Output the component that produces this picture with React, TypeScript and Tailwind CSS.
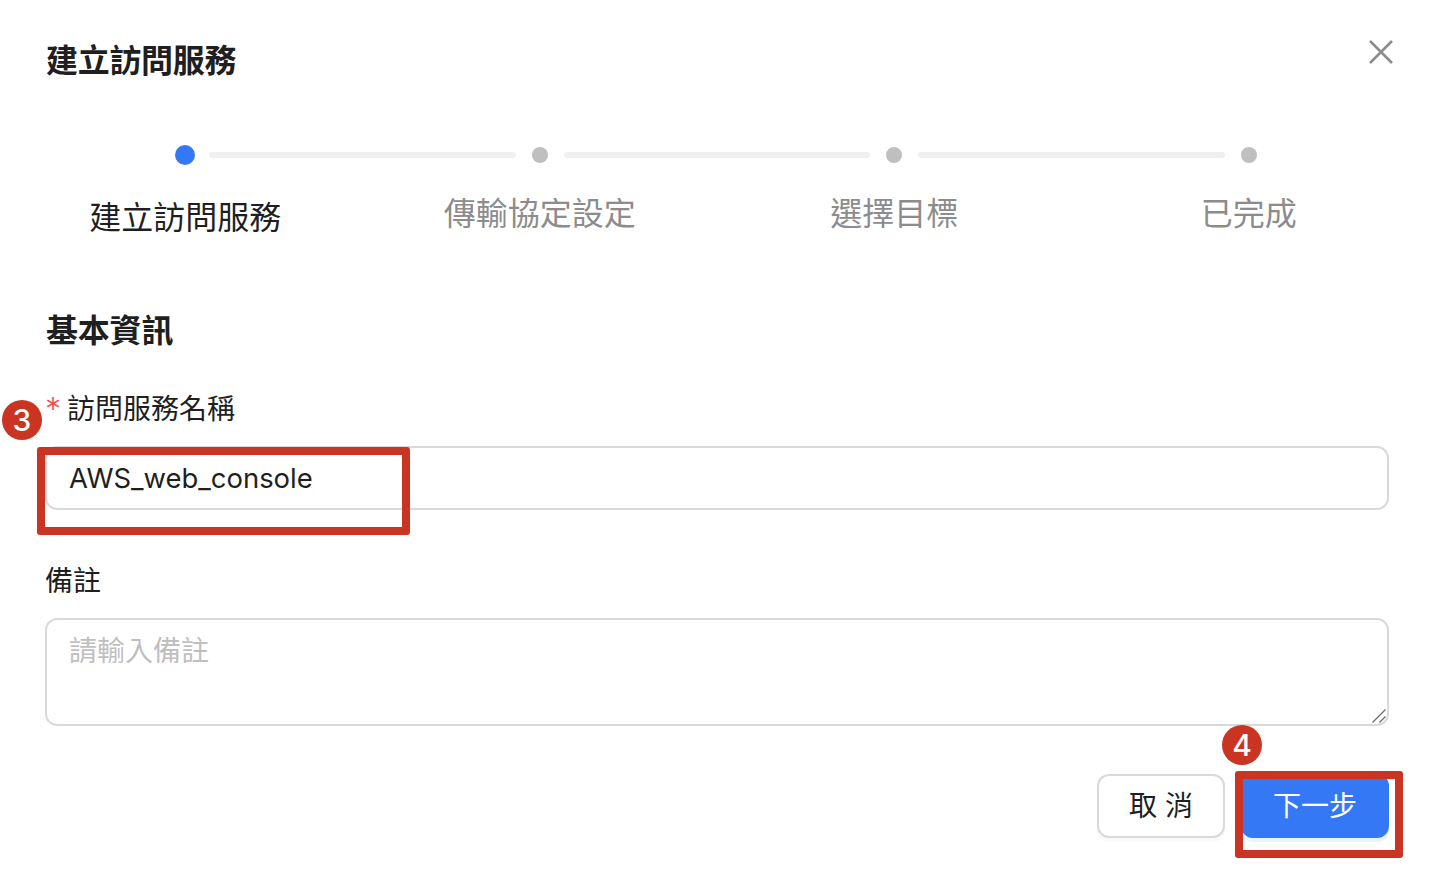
const font = '"Inter", "Noto Sans CJK TC", sans-serif';

const steps = ["建立訪問服務", "傳輸協定設定", "選擇目標", "已完成"];
const segments = [
  { w: "w-[353px]", ml: "ml-[14px]" },
  { w: "w-[354px]", ml: "ml-4" },
  { w: "w-[355px]", ml: "ml-4" },
];

function Badge({ n, className }: { n: number; className: string }) {
  return (
    <div
      className={`absolute w-10 h-10 rounded-full bg-[#c93522] text-white flex items-center justify-center text-[30px] font-medium leading-none ${className}`}
    >
      {n}
    </div>
  );
}

export default function App() {
  return (
    <div
      className="relative w-[1430px] h-[876px] overflow-hidden bg-white text-[#1f1f1f] pl-[46px] pr-[40px]"
      style={{ fontFamily: font }}
    >
      {/* header */}
      <div className="flex items-center justify-between pt-[38px] h-[84px]">
        <h1 className="text-[32px] leading-[46px] font-bold tracking-[-0.3px]">建立訪問服務</h1>
        <button className="-mt-[18px] mr-[-3px] text-[#8c8c8c]">
          <svg width="24" height="24" viewBox="0 0 24 24" stroke="currentColor" strokeWidth="2.6" fill="none">
            <path d="M1 1 L23 23 M23 1 L1 23" />
          </svg>
        </button>
      </div>

      {/* stepper */}
      <div className="mt-[61px] ml-[129px] flex items-center h-5">
        <span className="w-5 h-5 rounded-full bg-[#3578f6] shrink-0" />
        {segments.map((seg) => (
          <div key={seg.w} className={`flex items-center ${seg.w}`}>
            <span className={`flex-1 h-[6px] rounded-full bg-[#f0f0f0] mr-4 ${seg.ml}`} />
            <span className="w-4 h-4 rounded-full bg-[#bfbfbf] shrink-0" />
          </div>
        ))}
      </div>
      <div className="-ml-[38px] -mr-[36px] mt-[26px] grid grid-cols-4 text-center text-[32px] leading-[46px] h-[50px]">
        {steps.map((s, i) => (
          <div key={s} className={i === 0 ? "pt-[4px]" : "text-[#8c8c8c]"}>
            {s}
          </div>
        ))}
      </div>

      {/* form */}
      <h2 className="mt-[67px] text-[32px] leading-[46px] font-bold tracking-[-0.2px]">基本資訊</h2>

      <label className="mt-[35px] flex items-center text-[28px] leading-[40px] h-10">
        <span className="-ml-px w-[22px] text-[32px] font-light text-[#ff4d4f] leading-none pt-[2px]">*</span>
        訪問服務名稱
      </label>
      <input
        readOnly
        value="AWS_web_console"
        className="mt-[17px] block w-full h-16 -ml-px rounded-xl border-2 border-[#d9d9d9] bg-white px-[22px] text-[27.44px] text-[#1f1f1f] outline-none"
        style={{ fontFamily: font }}
      />

      <label className="mt-[51px] block text-[28px] leading-[40px] -ml-px">備註</label>
      <div className="relative mt-[17px] -ml-px mr-px">
        <textarea
          readOnly
          placeholder="請輸入備註"
          className="block w-full h-[108px] resize-none rounded-xl border-2 border-[#d9d9d9] bg-white px-[22px] py-[9px] text-[28px] leading-[44px] outline-none placeholder:text-[#bfbfbf]"
          style={{ fontFamily: font }}
        />
        <svg className="absolute right-[3px] bottom-[3px]" width="14" height="14" viewBox="0 0 14 14" stroke="#6b6b6b" strokeWidth="1.3" fill="none">
          <path d="M0.5 13.5 L13.5 0.5 M7.5 13.5 L13.5 7.5" />
        </svg>
      </div>

      {/* footer buttons */}
      <div className="mt-[48px] mr-px flex justify-end gap-4">
        <button className="w-32 h-16 rounded-xl border-2 border-[#d9d9d9] bg-white text-[28px] shadow-[0_4px_0_rgba(0,0,0,0.02)]">
          取 消
        </button>
        <button className="w-[148px] h-16 rounded-xl bg-[#3578f6] text-white text-[28px] shadow-[0_4px_0_rgba(5,145,255,0.1)]">
          下一步
        </button>
      </div>

      {/* annotations drawn over the screenshot */}
      <Badge n={3} className="left-[2px] top-[400px]" />
      <Badge n={4} className="left-[1222px] top-[725px]" />
      <div className="absolute left-[37px] top-[447px] w-[373px] h-[88px] border-[8px] border-[#c93522] rounded-[3px]" />
      <div className="absolute left-[1235px] top-[771px] w-[168px] h-[87px] border-[8px] border-[#c93522] rounded-[3px]" />
    </div>
  );
}
